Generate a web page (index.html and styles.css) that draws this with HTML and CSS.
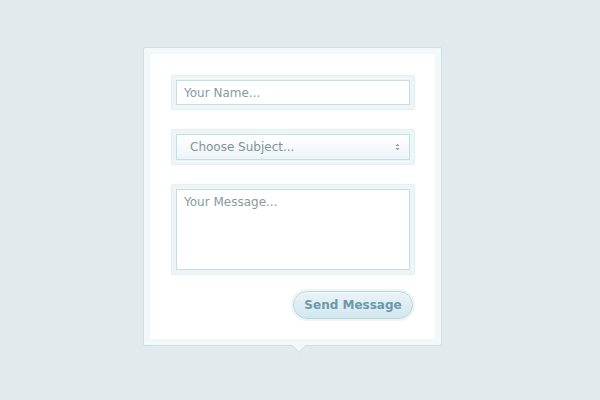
FILE: index.html
```html
<!DOCTYPE html>
<html lang="en">
<head>
  <meta charset="UTF-8">
  <meta name="viewport" content="width=device-width, initial-scale=1.0">
  <title>Contact Form</title>
  <link rel="stylesheet" href="styles.css">
</head>
<body>
  <main>
    <form class="contact-card">
      <div class="contact-inner">
        <div class="field">
          <input type="text" class="text-input" placeholder="Your Name...">
        </div>
        <div class="field">
          <div class="select-wrap">
            <select class="select-input">
              <option>Choose Subject...</option>
            </select>
            <svg class="select-arrows" width="5" height="8" viewBox="0 0 5 8">
              <path d="M0.5 3 L2.5 0.8 L4.5 3 Z M0.5 5 L2.5 7.2 L4.5 5 Z" fill="#8d9da2"/>
            </svg>
          </div>
        </div>
        <div class="field">
          <textarea class="text-area" placeholder="Your Message..."></textarea>
        </div>
        <div class="actions">
          <button type="button" class="send-btn">Send Message</button>
        </div>
      </div>
    </form>
  </main>
</body>
</html>
```

FILE: styles.css
```css
body {
  margin: 0;
  min-height: 100vh;
  background-color: #e3eaed;
  font-family: 'DejaVu Sans', Verdana, sans-serif;
}
main {
  display: flex;
  justify-content: flex-start;
  padding: 47px 0 0 143px;
}
.contact-card {
  position: relative;
  width: 299px;
  box-sizing: border-box;
  margin: 0;
  padding: 6px;
  border: 1px solid #cfdee3;
  border-radius: 2px;
  background-color: #f3f8f9;
}
/* little pointer under the card */
.contact-card::after {
  content: "";
  position: absolute;
  left: 150px;
  bottom: -6px;
  width: 9px;
  height: 9px;
  background-color: #f3f8f9;
  border-right: 1px solid #cfdee3;
  border-bottom: 1px solid #cfdee3;
  transform: rotate(45deg);
}
.contact-inner {
  display: flex;
  flex-direction: column;
  gap: 19px;
  padding: 21px 20px 20px 21px;
  background-color: #ffffff;
  border-radius: 2px;
  box-shadow: 0 0 2px #e8f1f3;
}
.field {
  padding: 4px;
  background-color: #eef5f7;
  border: 1px solid #e6f0f3;
  border-radius: 2px;
  box-shadow: 0 0 2px #f0f6f8;
}
.text-input, .select-input, .text-area {
  display: block;
  width: 100%;
  box-sizing: border-box;
  margin: 0;
  border: 1px solid #c5dde4;
  border-radius: 0;
  background-color: #ffffff;
  font-family: 'DejaVu Sans', Verdana, sans-serif;
  font-size: 12px;
  color: #7f9499;
  outline: none;
}
.text-input {
  height: 25px;
  padding: 0 7px;
}
.text-input::placeholder, .text-area::placeholder {
  color: #869a9f;
}
.select-wrap {
  position: relative;
}
.select-input {
  height: 26px;
  padding: 0 13px;
  -webkit-appearance: none;
  appearance: none;
  background: linear-gradient(#ffffff, #eef4f6);
  color: #7f9499;
}
.select-arrows {
  position: absolute;
  right: 10px;
  top: 9px;
}
.text-area {
  height: 81px;
  padding: 5px 7px;
  resize: none;
}
.actions {
  display: flex;
  justify-content: flex-end;
  margin-top: -3px;
}
.send-btn {
  width: 120px;
  height: 28px;
  margin-right: 2px;
  border: 1px solid #b9d5df;
  border-radius: 14px;
  background: linear-gradient(#e9f3f7, #d3e7ef);
  box-shadow: 0 0 0 2px #eef5f7, inset 0 1px 0 #f5fafc;
  font-family: 'DejaVu Sans', Verdana, sans-serif;
  font-size: 12px;
  font-weight: bold;
  color: #6b98ac;
  cursor: pointer;
}
```
